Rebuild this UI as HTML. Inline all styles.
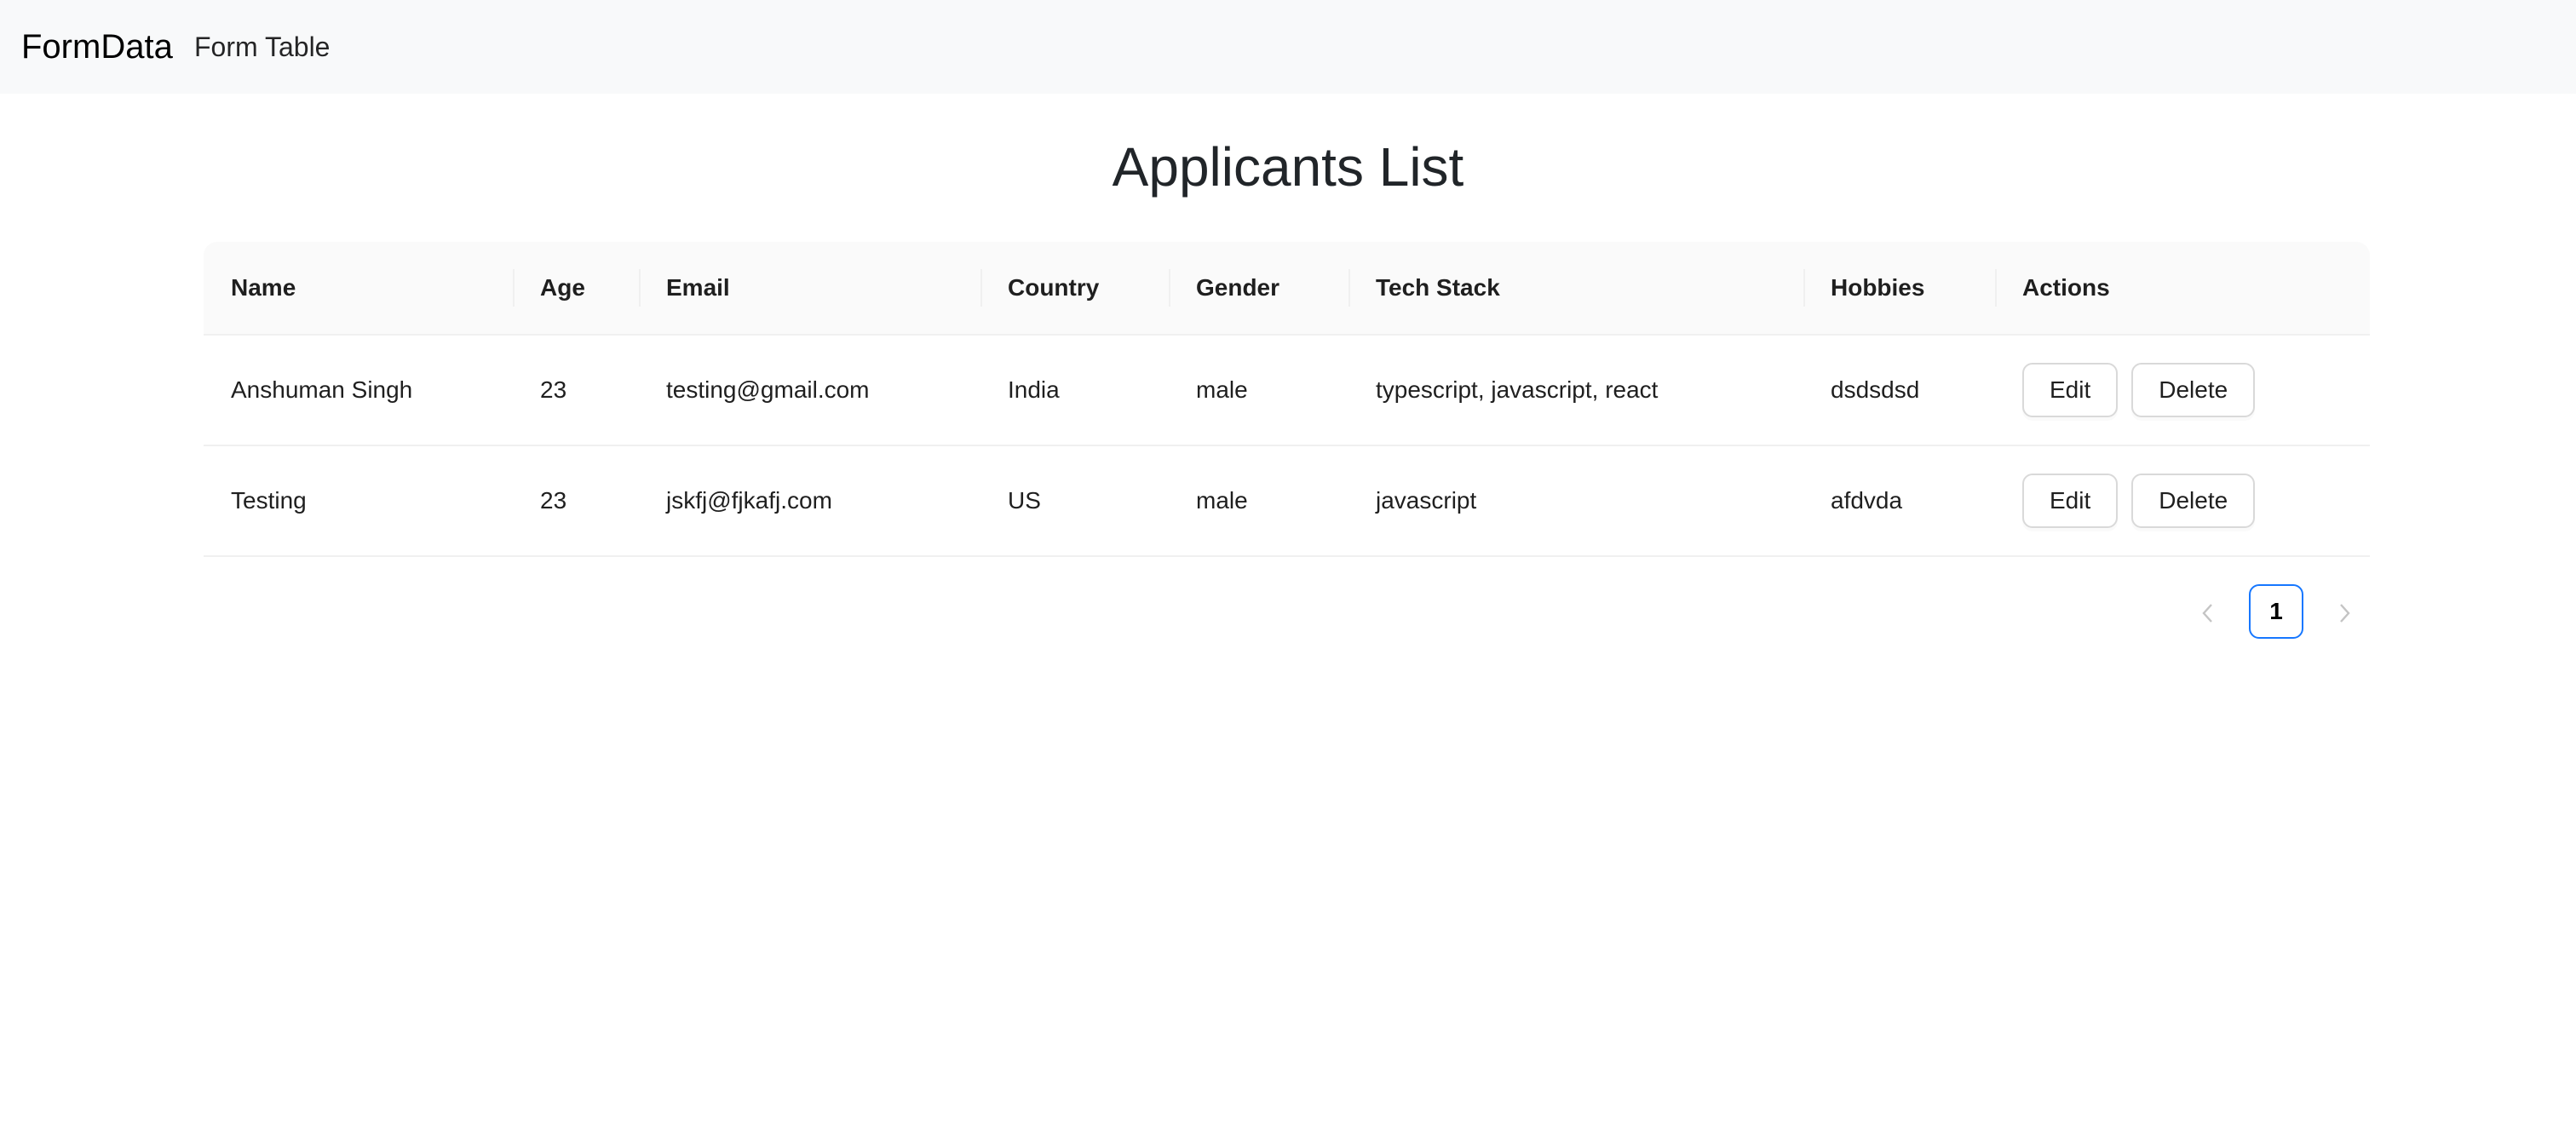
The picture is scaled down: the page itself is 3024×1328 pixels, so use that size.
<!DOCTYPE html>
<html><head><meta charset="utf-8"><style>
html,body{margin:0;padding:0;background:#fff}
body{zoom:2;width:1512px;height:664px;overflow:hidden;font-family:"Liberation Sans",Arial,sans-serif;color:rgba(0,0,0,.88)}
.nav{height:55px;background:#f8f9fa;position:relative}
.brand{position:absolute;left:12.5px;top:0;line-height:55px;font-size:20px;color:#000}
.link{position:absolute;left:114px;top:0;line-height:55px;font-size:16px;color:rgba(0,0,0,.85)}
h1{margin:0;position:absolute;top:79px;left:0;width:1512px;text-align:center;font-size:32px;font-weight:500;line-height:38px;color:#212529}
table{position:absolute;left:119.5px;top:142px;width:1271.5px;border-collapse:separate;border-spacing:0;font-size:14px;table-layout:fixed}
th{background:#fafafa;font-weight:bold;text-align:left;padding:16px;line-height:22px;border-bottom:1px solid #f0f0f0;position:relative}
th:first-child{border-top-left-radius:8px}
th:last-child{border-top-right-radius:8px}
th+th:before{content:"";position:absolute;left:0;top:50%;margin-top:-11px;height:22px;width:1px;background:#f0f0f0}
td{padding:16px;line-height:22px;border-bottom:1px solid #f0f0f0;height:32px;box-sizing:content-box;vertical-align:middle;white-space:nowrap}
.btn{display:inline-block;box-sizing:border-box;height:32px;line-height:30px;padding:0 15px;border:1px solid #d9d9d9;border-radius:6px;box-shadow:0 2px 0 rgba(0,0,0,.02);font-size:14px;margin-right:8px;background:#fff}
.pg{position:absolute;top:343px;height:32px;width:32px;text-align:center;line-height:32px;font-size:14px}
.cur{border:1px solid #1677ff;border-radius:6px;box-sizing:border-box;line-height:30px;font-weight:bold;color:#000}
</style></head><body>
<div class="nav"><span class="brand">FormData</span><span class="link">Form Table</span></div>
<h1>Applicants List</h1>
<table>
<colgroup><col style="width:181.5px"><col style="width:74px"><col style="width:200.5px"><col style="width:110.5px"><col style="width:105.5px"><col style="width:267px"><col style="width:112.5px"><col style="width:220px"></colgroup>
<thead><tr><th>Name</th><th>Age</th><th>Email</th><th>Country</th><th>Gender</th><th>Tech Stack</th><th>Hobbies</th><th>Actions</th></tr></thead>
<tbody>
<tr><td>Anshuman Singh</td><td>23</td><td>testing@gmail.com</td><td>India</td><td>male</td><td>typescript, javascript, react</td><td>dsdsdsd</td><td><span class="btn">Edit</span><span class="btn">Delete</span></td></tr>
<tr><td>Testing</td><td>23</td><td>jskfj@fjkafj.com</td><td>US</td><td>male</td><td>javascript</td><td>afdvda</td><td><span class="btn">Edit</span><span class="btn">Delete</span></td></tr>
</tbody></table>
<div class="pg" style="left:1280px"><svg width="10" height="12" viewBox="0 0 10 12" style="vertical-align:middle"><path d="M7 1 L2.5 6 L7 11" fill="none" stroke="#c4c4c4" stroke-width="1.2"/></svg></div>
<div class="pg cur" style="left:1320px">1</div>
<div class="pg" style="left:1360px"><svg width="10" height="12" viewBox="0 0 10 12" style="vertical-align:middle"><path d="M3 1 L7.5 6 L3 11" fill="none" stroke="#c4c4c4" stroke-width="1.2"/></svg></div>
</body></html>
